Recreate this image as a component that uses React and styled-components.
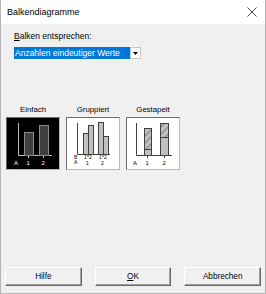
import React from "react";
import styled, { createGlobalStyle } from "styled-components";

const GlobalStyle = createGlobalStyle`
  html, body {
    margin: 0;
    padding: 0;
    background: #ffffff;
  }
  body {
    font-family: "Liberation Sans", Arial, sans-serif;
    font-size: 8.5px;
    color: #000;
  }
`;

const Window = styled.div`
  width: 266px;
  height: 294px;
  box-sizing: border-box;
  border: 1px solid #b4b4b4;
  border-top: none;
  background: #f0f0f0;
  display: flex;
  flex-direction: column;
`;

const TitleBar = styled.div`
  height: 24px;
  background: #ffffff;
  display: flex;
  align-items: center;
  justify-content: space-between;
  padding: 0 8px 0 6px;
  font-size: 9px;
`;

const Body = styled.div`
  flex: 1;
  display: flex;
  flex-direction: column;
  padding: 7px 4px 4px 4px;
`;

const FieldLabel = styled.div`
  line-height: 10px;
  padding-left: 9px;
  u { text-decoration: underline; }
`;

const Select = styled.div`
  margin: 6px 0 0 9px;
  width: 127px;
  height: 12px;
  display: flex;
`;

const SelectValue = styled.div`
  flex: 1;
  background: #0078d7;
  color: #fff;
  line-height: 12px;
  padding-left: 1px;
  white-space: nowrap;
`;

const SelectButton = styled.div`
  width: 11px;
  box-sizing: border-box;
  border: 1px solid #c8c8c8;
  background: #ffffff;
  display: flex;
  align-items: center;
  justify-content: center;
`;

const ChartRow = styled.div`
  margin-top: 46px;
  display: flex;
  gap: 6px;
  padding-left: 1px;
`;

const ChartOption = styled.div`
  width: 54px;
  display: flex;
  flex-direction: column;
  align-items: center;
  gap: 2px;
`;

const OptionLabel = styled.div`
  line-height: 10px;
  font-size: 7.8px;
`;

const ChartBox = styled.div`
  width: 54px;
  height: 53px;
  box-sizing: border-box;
  border: 1px solid;
  border-color: #6d6d6d #b9b9b9 #b9b9b9 #6d6d6d;
  background: ${(p) => (p.$selected ? "#000" : "#fff")};
  display: flex;
`;

const Spacer = styled.div`
  flex: 1;
`;

const ButtonRow = styled.div`
  display: flex;
  gap: 13px;
  padding-bottom: 3px;
`;

const Button = styled.button`
  width: 77px;
  height: 19px;
  box-sizing: border-box;
  font-family: inherit;
  font-size: 8.2px;
  color: #000;
  background: #f0f0f0;
  border: 1px solid;
  border-color: #ffffff #696969 #696969 #ffffff;
  box-shadow: inset -1px -1px 0 #a0a0a0;
  padding: 0;
  u { text-decoration: underline; }
`;

const CloseIcon = () => (
  <svg width="10" height="10" viewBox="0 0 10 10">
    <path d="M0.5 0.5 L9.5 9.5 M9.5 0.5 L0.5 9.5" stroke="#333" strokeWidth="0.9" />
  </svg>
);

const Caret = () => (
  <svg width="5" height="3" viewBox="0 0 5 3">
    <path d="M0 0 H5 L2.5 3 Z" fill="#000" />
  </svg>
);

const Hatch = ({ id }) => (
  <pattern id={id} width="5" height="5" patternUnits="userSpaceOnUse" patternTransform="rotate(45)">
    <rect width="5" height="5" fill="#c0c0c0" />
    <line x1="0" y1="0" x2="0" y2="5" stroke="#333" strokeWidth="0.9" />
  </pattern>
);

const lbl = { fontFamily: "Liberation Sans, Arial, sans-serif", fontSize: 6 };

const SimpleChart = () => (
  <svg width="52" height="51" viewBox="0 0 52 51">
    <g stroke="#bfbfbf" strokeWidth="1" fill="none">
      <path d="M11.5 5 V37.5 H45" />
      <path d="M21.5 37 V40 M36.5 37 V40" />
    </g>
    <rect x="17.5" y="14.5" width="9" height="23" fill="#404040" stroke="#8a8a8a" />
    <rect x="32.5" y="7.5" width="9" height="30" fill="#404040" stroke="#8a8a8a" />
    <g fill="#fff" style={lbl}>
      <text x="7" y="47">A</text>
      <text x="19.5" y="47">1</text>
      <text x="34.5" y="47">2</text>
    </g>
  </svg>
);

const GroupedChart = () => (
  <svg width="52" height="51" viewBox="0 0 52 51">
    <g stroke="#404040" strokeWidth="1" fill="none">
      <path d="M10.5 5 V36.5 H43" />
      <path d="M21 36 V39 M36 36 V39" />
    </g>
    <g fill="#c0c0c0" stroke="#404040">
      <rect x="16.5" y="15.5" width="5" height="21" />
      <rect x="21.5" y="7.5" width="5" height="29" />
      <rect x="31.5" y="4.5" width="5" height="32" />
      <rect x="36.5" y="18.5" width="5" height="18" />
    </g>
    <g fill="#000" style={{ ...lbl, fontSize: 5 }}>
      <text x="7" y="41">B</text>
      <text x="7" y="46">A</text>
      <text x="17" y="41">1</text>
      <text x="22" y="41">2</text>
      <text x="32" y="41">1</text>
      <text x="37" y="41">2</text>
      <text x="19" y="46.5">1</text>
      <text x="34" y="47">2</text>
    </g>
  </svg>
);

const StackedChart = () => (
  <svg width="52" height="51" viewBox="0 0 52 51">
    <defs>
      <Hatch id="hatch" />
    </defs>
    <g stroke="#404040" strokeWidth="1" fill="none">
      <path d="M9.5 5 V37.5 H45" />
      <path d="M20.5 37 V40 M37.5 37 V40" />
    </g>
    <rect x="17.5" y="10.5" width="7" height="21" fill="url(#hatch)" stroke="#404040" />
    <rect x="17.5" y="31.5" width="7" height="6" fill="#c0c0c0" stroke="#404040" />
    <rect x="33.5" y="5.5" width="8" height="14" fill="url(#hatch)" stroke="#404040" />
    <rect x="33.5" y="19.5" width="8" height="18" fill="#c0c0c0" stroke="#404040" />
    <g fill="#000" style={lbl}>
      <text x="6" y="47">A</text>
      <text x="18.5" y="47">1</text>
      <text x="35.5" y="47">2</text>
    </g>
  </svg>
);

const options = [
  { label: "Einfach", chart: <SimpleChart />, selected: true },
  { label: "Gruppiert", chart: <GroupedChart /> },
  { label: "Gestapelt", chart: <StackedChart /> },
];

export default function App() {
  return (
    <>
      <GlobalStyle />
      <Window>
        <TitleBar>
          <span>Balkendiagramme</span>
          <CloseIcon />
        </TitleBar>
        <Body>
          <FieldLabel>
            <u>B</u>alken entsprechen:
          </FieldLabel>
          <Select>
            <SelectValue>Anzahlen eindeutiger Werte</SelectValue>
            <SelectButton>
              <Caret />
            </SelectButton>
          </Select>
          <ChartRow>
            {options.map((o) => (
              <ChartOption key={o.label}>
                <OptionLabel>{o.label}</OptionLabel>
                <ChartBox $selected={o.selected}>{o.chart}</ChartBox>
              </ChartOption>
            ))}
          </ChartRow>
          <Spacer />
          <ButtonRow>
            <Button>Hilfe</Button>
            <Button>
              <u>O</u>K
            </Button>
            <Button>Abbrechen</Button>
          </ButtonRow>
        </Body>
      </Window>
    </>
  );
}
